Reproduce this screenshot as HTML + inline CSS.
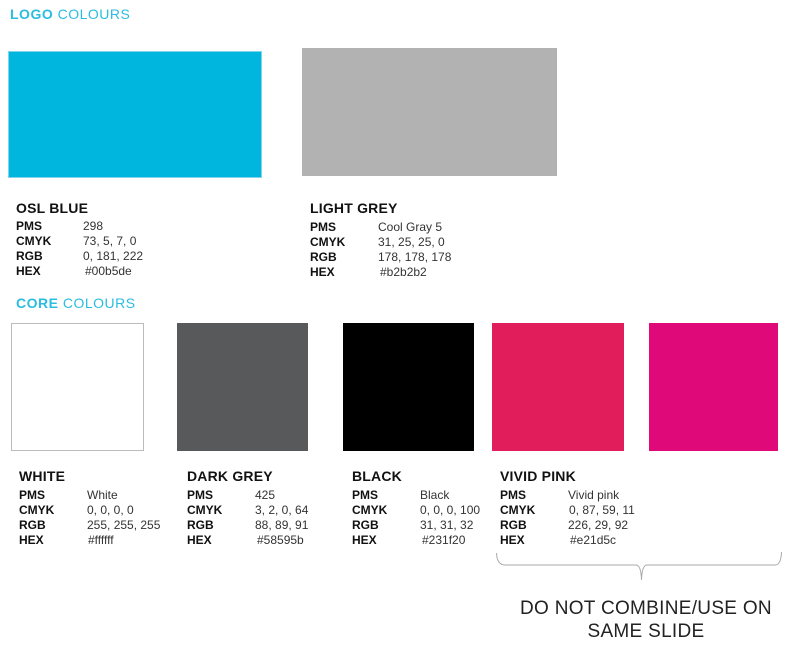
<!DOCTYPE html>
<html><head><style>
body{margin:0;width:800px;height:652px;background:#fff;position:relative;overflow:hidden;font-family:"Liberation Sans",sans-serif;color:#111}
.a{position:absolute}
.h{font-size:14px;color:#2bbde0;letter-spacing:.5px}
.h b{font-weight:bold}
.sw{position:absolute}
.t{position:absolute;font-size:14px;font-weight:bold;white-space:nowrap;letter-spacing:.2px}
.r{position:absolute;font-size:12px;line-height:15px;white-space:nowrap}
.r b{display:inline-block;font-weight:bold}
.r span{color:#333}
</style></head><body>
<div class="a h" style="left:10px;top:6px"><b>LOGO</b> COLOURS</div>
<div class="sw" style="left:8px;top:51px;width:254px;height:127px;background:#00b5de;border:1px solid #7fd3ea;box-sizing:border-box"></div>
<div class="sw" style="left:302px;top:48px;width:255px;height:128px;background:#b2b2b2"></div>

<div class="t" style="left:16px;top:200px">OSL BLUE</div>
<div class="r" style="left:16px;top:219px"><b style="width:67px">PMS</b><span>298</span><br><b style="width:67px">CMYK</b><span>73, 5, 7, 0</span><br><b style="width:67px">RGB</b><span>0, 181, 222</span><br><b style="width:69px">HEX</b><span>#00b5de</span></div>

<div class="t" style="left:310px;top:200px">LIGHT GREY</div>
<div class="r" style="left:310px;top:220px"><b style="width:68px">PMS</b><span>Cool Gray 5</span><br><b style="width:68px">CMYK</b><span>31, 25, 25, 0</span><br><b style="width:68px">RGB</b><span>178, 178, 178</span><br><b style="width:70px">HEX</b><span>#b2b2b2</span></div>

<div class="a h" style="left:16px;top:295px"><b>CORE</b> COLOURS</div>
<div class="sw" style="left:11px;top:323px;width:133px;height:128px;border:1px solid #bbb;box-sizing:border-box"></div>
<div class="sw" style="left:177px;top:323px;width:131px;height:128px;background:#58595b"></div>
<div class="sw" style="left:343px;top:323px;width:131px;height:128px;background:#000"></div>
<div class="sw" style="left:492px;top:323px;width:132px;height:128px;background:#e21d5c"></div>
<div class="sw" style="left:649px;top:323px;width:129px;height:128px;background:#e0097a"></div>

<div class="t" style="left:19px;top:468px">WHITE</div>
<div class="r" style="left:19px;top:488px"><b style="width:68px">PMS</b><span>White</span><br><b style="width:68px">CMYK</b><span>0, 0, 0, 0</span><br><b style="width:68px">RGB</b><span>255, 255, 255</span><br><b style="width:69px">HEX</b><span>#ffffff</span></div>

<div class="t" style="left:187px;top:468px">DARK GREY</div>
<div class="r" style="left:187px;top:488px"><b style="width:68px">PMS</b><span>425</span><br><b style="width:68px">CMYK</b><span>3, 2, 0, 64</span><br><b style="width:68px">RGB</b><span>88, 89, 91</span><br><b style="width:70px">HEX</b><span>#58595b</span></div>

<div class="t" style="left:352px;top:468px">BLACK</div>
<div class="r" style="left:352px;top:488px"><b style="width:68px">PMS</b><span>Black</span><br><b style="width:68px">CMYK</b><span>0, 0, 0, 100</span><br><b style="width:68px">RGB</b><span>31, 31, 32</span><br><b style="width:70px">HEX</b><span>#231f20</span></div>

<div class="t" style="left:500px;top:468px">VIVID PINK</div>
<div class="r" style="left:500px;top:488px"><b style="width:68px">PMS</b><span>Vivid pink</span><br><b style="width:69px">CMYK</b><span>0, 87, 59, 11</span><br><b style="width:68px">RGB</b><span>226, 29, 92</span><br><b style="width:70px">HEX</b><span>#e21d5c</span></div>

<svg class="a" style="left:0;top:0" width="800" height="652"><path d="M496.5 553 Q497 565 505 565 L636 565 Q641 565 641.5 580 Q642 565 647 565 L775 565 Q781 565 781.5 552" fill="none" stroke="#aaa" stroke-width="1"/></svg>

<div class="a" style="left:486px;top:597px;width:320px;text-align:center;font-size:19px;line-height:23px;color:#222;letter-spacing:.3px">DO NOT COMBINE/USE ON<br>SAME SLIDE</div>
</body></html>
